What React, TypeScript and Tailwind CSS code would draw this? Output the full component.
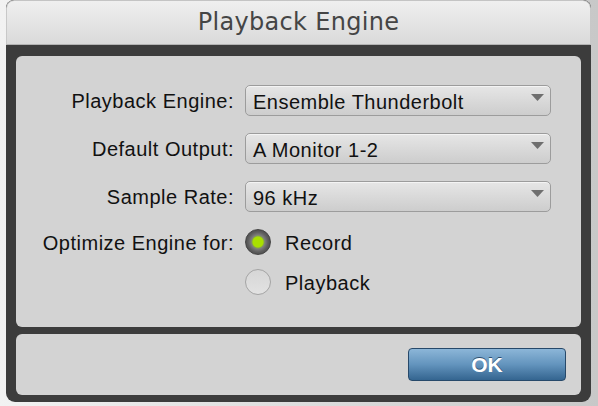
import React from 'react'

const rows = [
  { label: 'Playback Engine:', value: 'Ensemble Thunderbolt' },
  { label: 'Default Output:', value: 'A Monitor 1-2' },
  { label: 'Sample Rate:', value: '96 kHz' },
]

function Dropdown({ value }: { value: string }) {
  return (
    <div className="relative flex h-[31px] w-[306px] items-center rounded-[5px] border border-[#9c9c9c] bg-linear-to-b from-[#e6e6e6] to-[#cdcdcd] pl-[7px] pt-[2px] shadow-[inset_0_1px_0_#f4f4f4]">
      {value}
      <svg className="absolute right-[6px] top-[8px]" width="13" height="7" viewBox="0 0 13 7">
        <path d="M0 0 L13 0 L6.5 7 Z" fill="#6f6f6f" />
      </svg>
    </div>
  )
}

function Radio({ on, label }: { on?: boolean; label: string }) {
  return (
    <div className="flex h-[26px] items-center">
      {on ? (
        <div className="h-[26px] w-[26px] rounded-full border border-[#444] bg-[radial-gradient(circle,#a9e000_0,#a9e000_5px,#86a34a_6px,#7c7c7c_7px,#5e5e5e_10px,#4c4c4c_13px)]" />
      ) : (
        <div className="h-[26px] w-[26px] rounded-full border-[1.5px] border-[#a4a4a4] bg-linear-to-b from-[#d6d6d6] to-[#e2e2e2]" />
      )}
      <span className="ml-[14px] pt-[1px]">{label}</span>
    </div>
  )
}

export default function App() {
  return (
    <div
      className="h-[406px] w-[598px] bg-linear-to-r from-[#f2f2f2] to-[#c8c8c8] px-[6px] text-[20px] tracking-[0.5px] text-[#111]"
      style={{ fontFamily: '"Liberation Sans", Arial, sans-serif' }}
    >
      <div className="flex h-[402px] w-[585px] flex-col overflow-hidden rounded-t-[8px] rounded-b-[9px] bg-[#3c3c3c]">
        {/* TITLE */}
        <div
          className="flex h-[45px] shrink-0 items-center justify-center rounded-t-[8px] border border-b-[#b3b3b3] border-t-[#c4c4c4] border-x-[#c8c8c8] bg-linear-to-b from-[#efefef] to-[#dadada] pb-[1px] text-[24px] tracking-[0.3px] text-[#454545]"
          style={{ fontFamily: '"DejaVu Sans", sans-serif' }}
        >
          Playback Engine
        </div>

        <div className="flex flex-1 flex-col gap-[7px] px-[10px] pb-[7px] pt-[11px]">
          {/* SETTINGS */}
          <div className="flex h-[271px] shrink-0 flex-col gap-[17px] rounded-[6px] bg-[#d3d3d3] pt-[29px]">
            {rows.map((r) => (
              <div key={r.label} className="flex items-center">
                <span className="w-[218px] pt-[1px] text-right">{r.label}</span>
                <div className="ml-[11px]">
                  <Dropdown value={r.value} />
                </div>
              </div>
            ))}
            <div className="flex">
              <span className="flex h-[26px] w-[218px] items-center justify-end pt-[1px]">Optimize Engine for:</span>
              <div className="ml-[11px] flex flex-col gap-[14px]">
                <Radio on label="Record" />
                <Radio label="Playback" />
              </div>
            </div>
          </div>

          {/* FOOTER */}
          <div className="flex flex-1 justify-end rounded-[6px] bg-[#d3d3d3] pr-[15px] pt-[14px]">
            <button className="flex h-[33px] w-[158px] items-center justify-center rounded-[4px] border border-[#27496a] bg-linear-to-b from-[#8cb6d8] via-[#6394bd] to-[#346590] text-[21px] font-bold tracking-normal text-white [text-shadow:0_-1px_0_#2b4e70]">
              OK
            </button>
          </div>
        </div>
      </div>
    </div>
  )
}
